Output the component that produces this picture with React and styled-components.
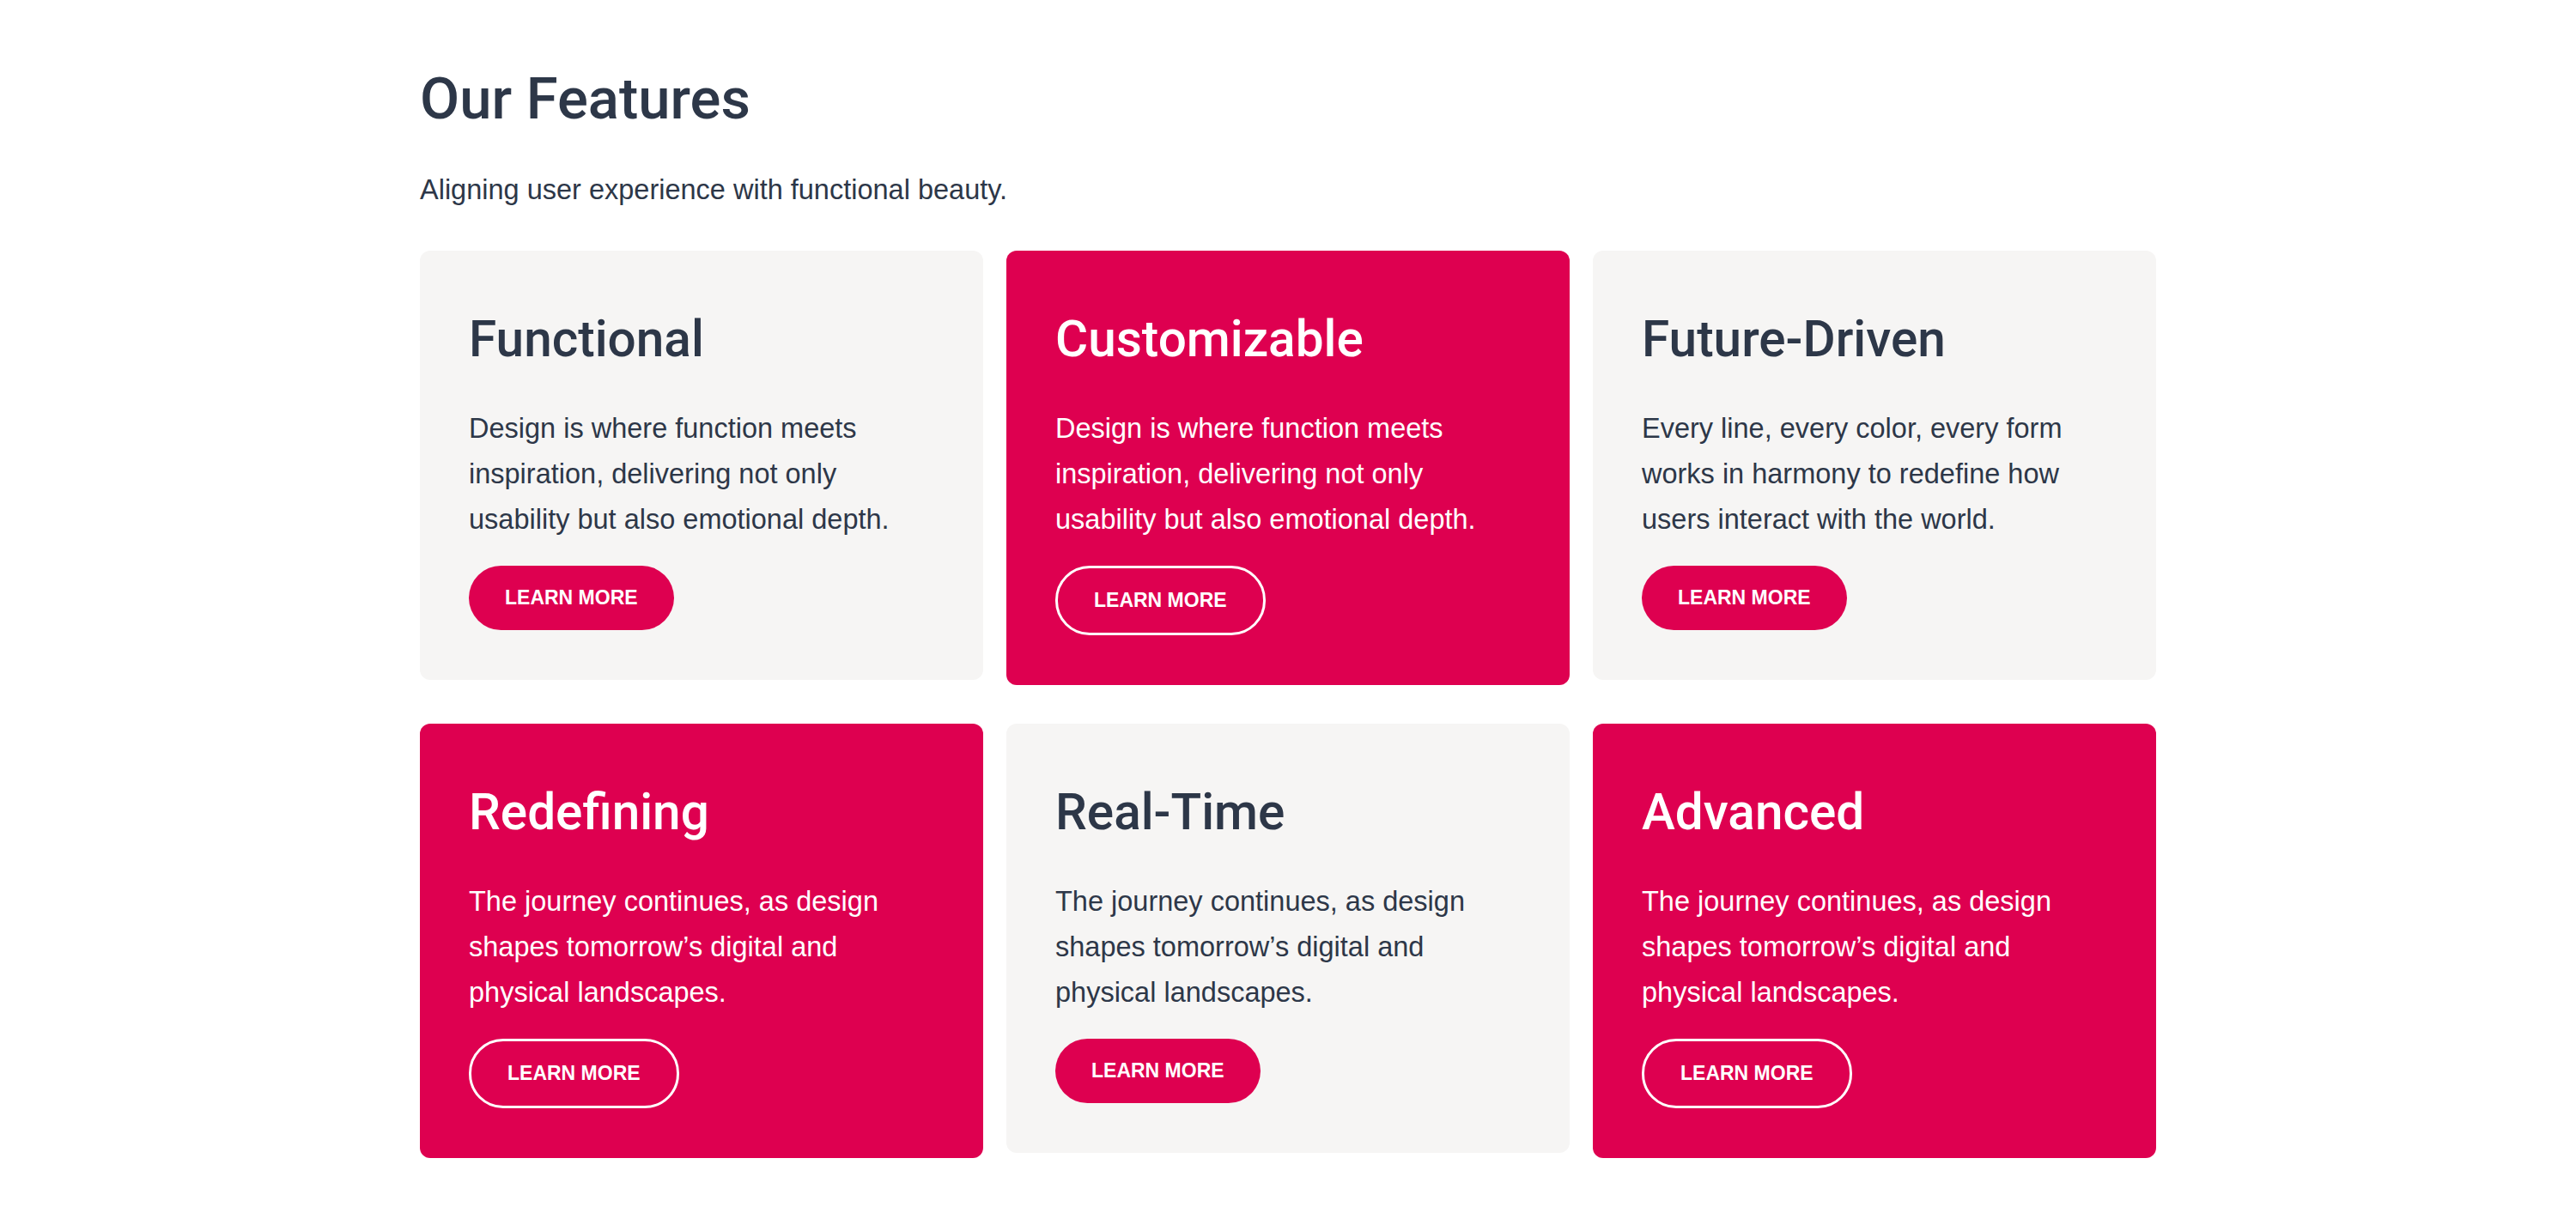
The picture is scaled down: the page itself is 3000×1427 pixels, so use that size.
import React from 'react';
import styled, { createGlobalStyle } from 'styled-components';

const GlobalStyle = createGlobalStyle`
    body {
        margin: 0;
        background: #ffffff;
        font-family: 'Liberation Sans', Arial, sans-serif;
    }
`;

const features = [
    { title: 'Functional', text: 'Design is where function meets inspiration, delivering not only usability but also emotional depth.', accent: false },
    { title: 'Customizable', text: 'Design is where function meets inspiration, delivering not only usability but also emotional depth.', accent: true },
    { title: 'Future-Driven', text: 'Every line, every color, every form works in harmony to redefine how users interact with the world.', accent: false },
    { title: 'Redefining', text: 'The journey continues, as design shapes tomorrow\u2019s digital and physical landscapes.', accent: true },
    { title: 'Real-Time', text: 'The journey continues, as design shapes tomorrow\u2019s digital and physical landscapes.', accent: false },
    { title: 'Advanced', text: 'The journey continues, as design shapes tomorrow\u2019s digital and physical landscapes.', accent: true },
];

export default function App() {
    return (
        <>
            <GlobalStyle />
            <Section>
                <Heading>Our Features</Heading>
                <Intro>Aligning user experience with functional beauty.</Intro>
                <Grid>
                    {features.map((f) => (
                        <Card key={f.title} $accent={f.accent}>
                            <CardTitle>{f.title}</CardTitle>
                            <CardText>{f.text}</CardText>
                            <LearnMore $accent={f.accent}>Learn more</LearnMore>
                        </Card>
                    ))}
                </Grid>
            </Section>
        </>
    );
}

const Section = styled.section`
    width: 2022px;
    margin: 0 auto;
    padding: 75px 0 60px;
    color: #2d3748;
`;

const Heading = styled.h2`
    margin: 0;
    font-family: Roboto, 'Liberation Sans', sans-serif;
    font-weight: 500;
    font-size: 67px;
    line-height: 1.2;
`;

const Intro = styled.p`
    margin: 42px 0 46px;
    font-size: 32.5px;
    line-height: 1.5;
`;

const Grid = styled.div`
    display: grid;
    grid-template-columns: repeat(3, 1fr);
    column-gap: 27px;
    row-gap: 45px;
    align-items: start;
`;

const Card = styled.div`
    display: flex;
    flex-direction: column;
    align-items: flex-start;
    padding: 61px 57px 58px;
    border-radius: 12px;
    background: ${(p) => (p.$accent ? '#de0050' : '#f6f5f4')};
    color: ${(p) => (p.$accent ? '#ffffff' : '#2d3748')};
`;

const CardTitle = styled.h3`
    margin: 0 0 35px;
    font-family: Roboto, 'Liberation Sans', sans-serif;
    font-weight: 500;
    font-size: 58.5px;
    line-height: 85px;
`;

const CardText = styled.p`
    margin: 0 0 27px;
    font-size: 32.5px;
    line-height: 53px;
`;

const LearnMore = styled.a`
    display: inline-block;
    padding: 0 42px;
    height: 75px;
    line-height: 75px;
    border-radius: 40px;
    font-size: 23px;
    font-weight: 700;
    text-transform: uppercase;
    text-decoration: none;
    cursor: pointer;
    color: #ffffff;
    background: ${(p) => (p.$accent ? 'transparent' : '#de0050')};
    border: ${(p) => (p.$accent ? '3px solid #ffffff' : 'none')};
`;
